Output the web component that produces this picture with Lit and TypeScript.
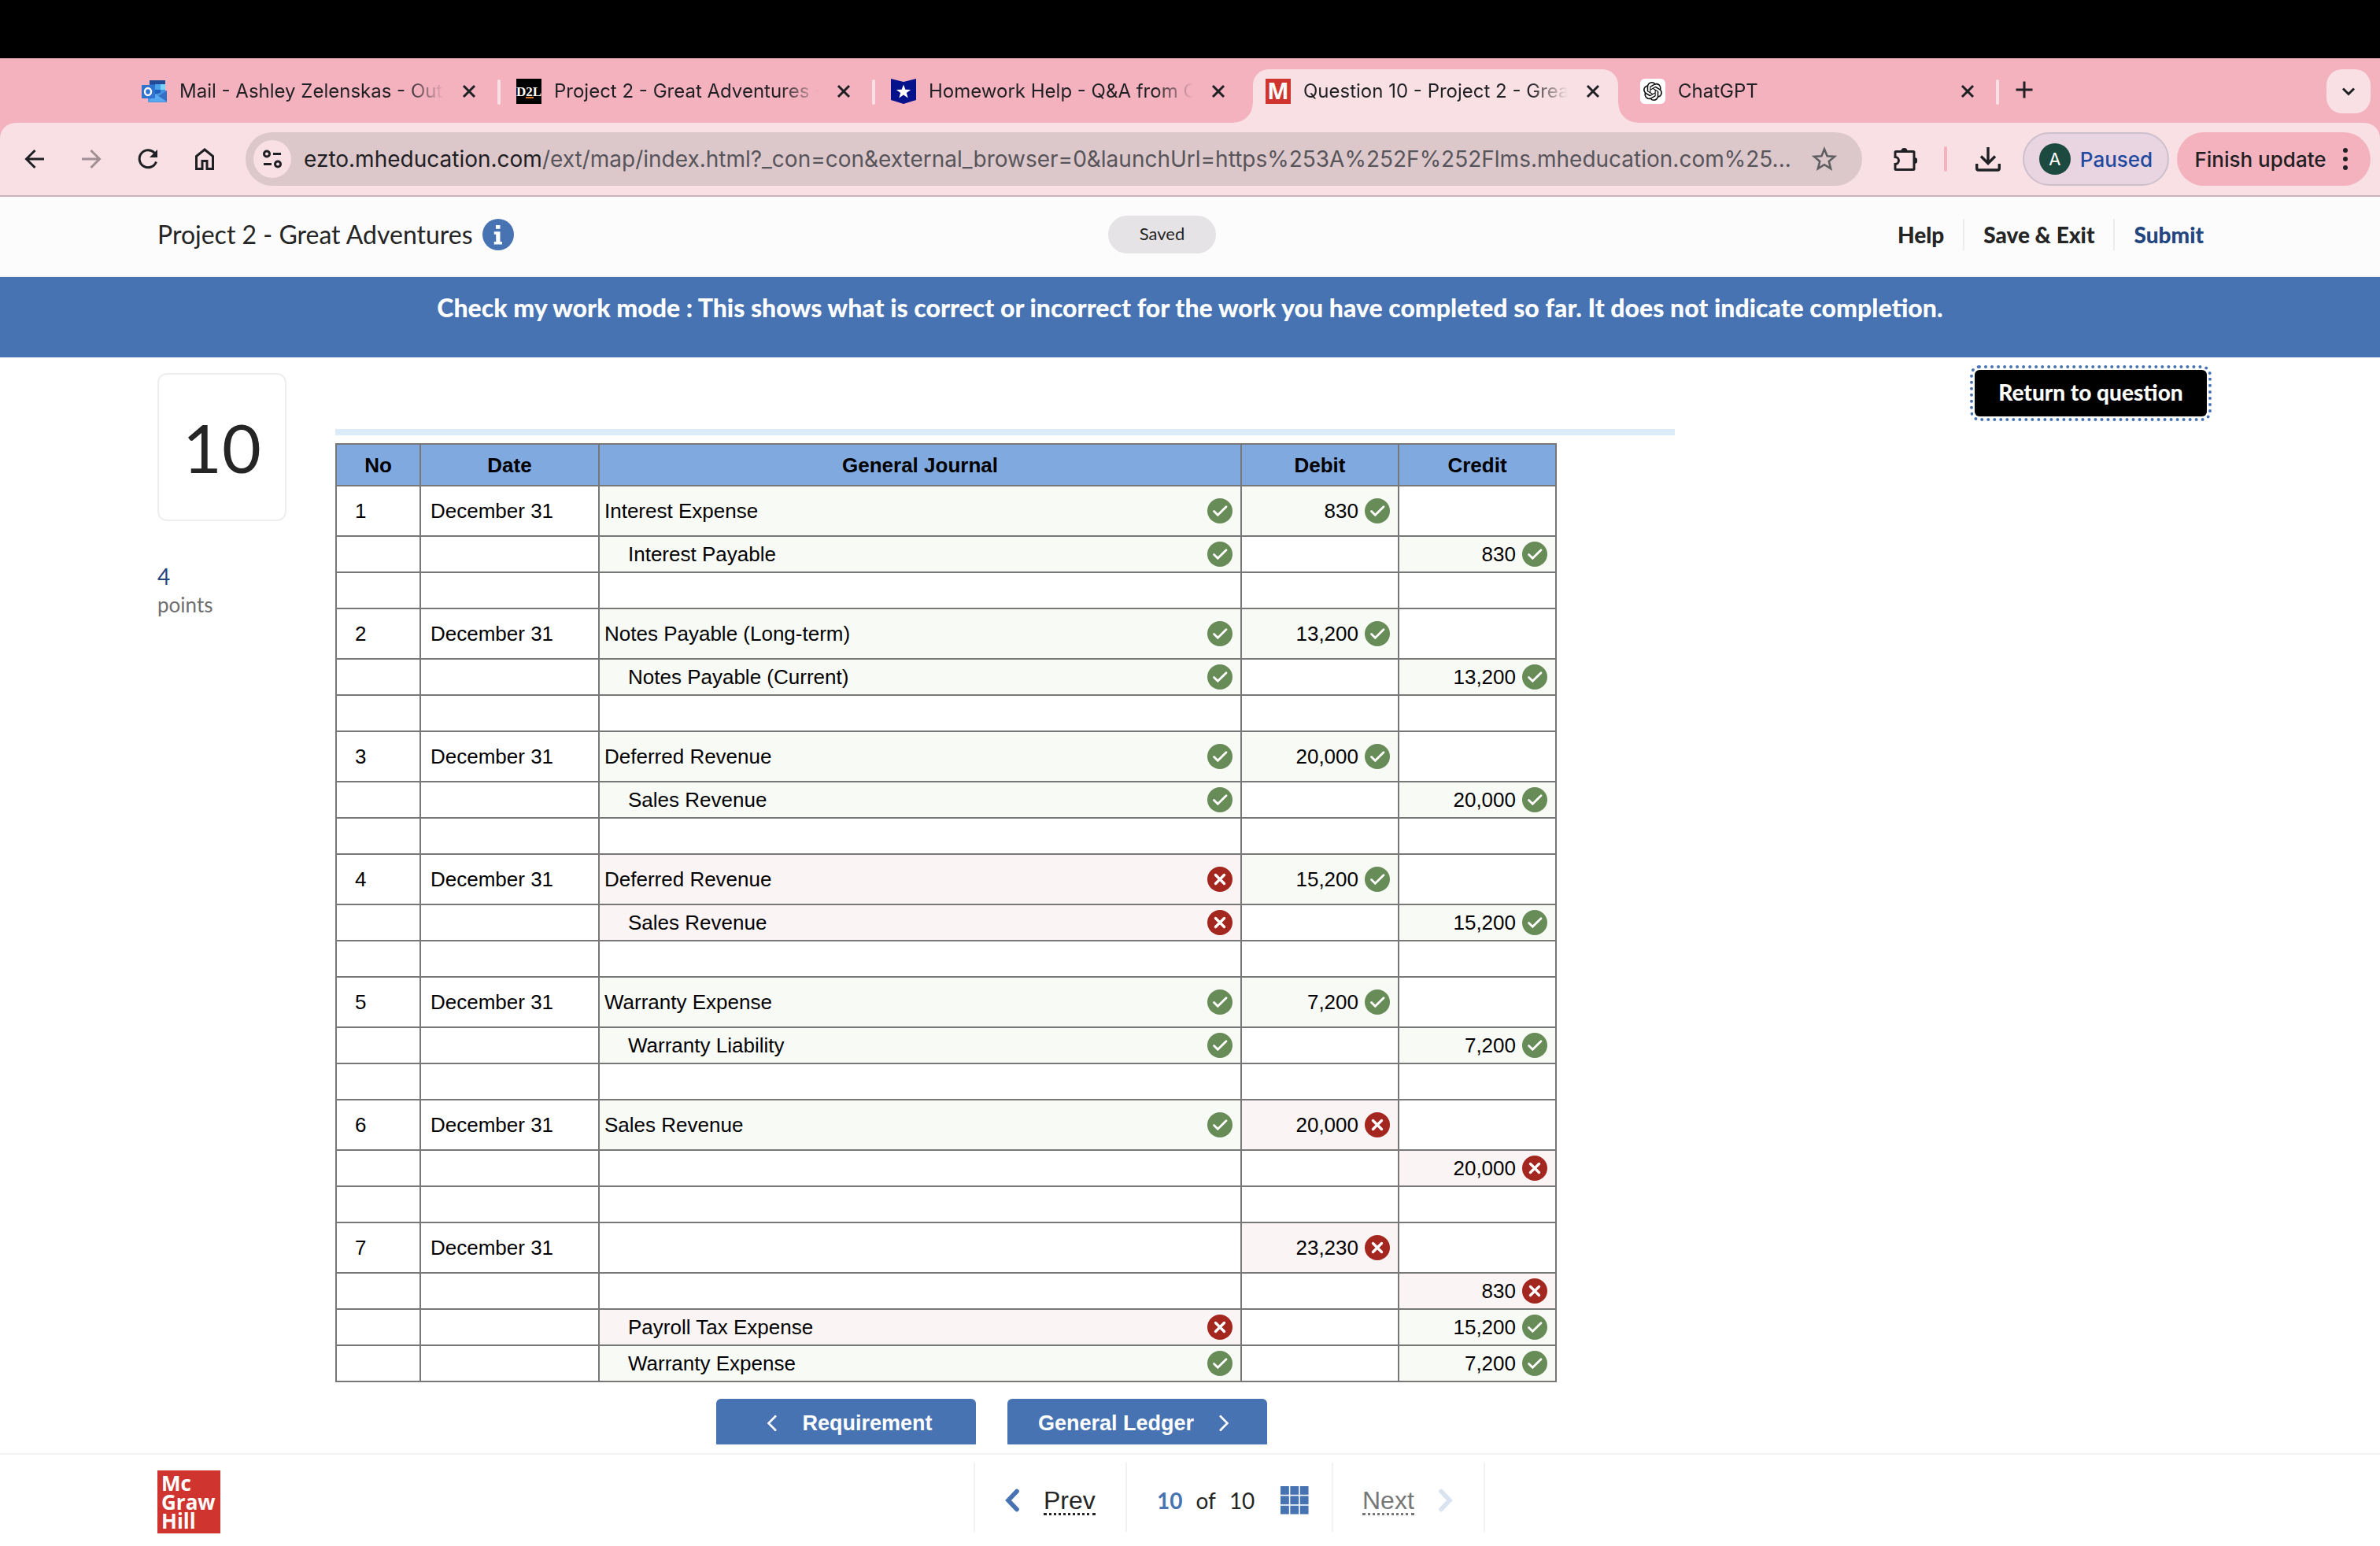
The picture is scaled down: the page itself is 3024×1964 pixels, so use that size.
import { LitElement, html, svg, css, nothing } from "lit";
import { customElement, property } from "lit/decorators.js";
import { classMap } from "lit/directives/class-map.js";

type Mark = "ok" | "bad";
interface Row {
  no?: string;
  date?: string;
  account?: string;
  accountMark?: Mark;
  indent?: boolean;
  debit?: string;
  debitMark?: Mark;
  credit?: string;
  creditMark?: Mark;
}

const entry = (
  no: string,
  account: string,
  accountMark: Mark | undefined,
  debit: string,
  debitMark: Mark
): Row => ({ no, date: "December 31", account, accountMark, debit, debitMark });

const contra = (
  account: string,
  accountMark: Mark | undefined,
  credit: string,
  creditMark: Mark
): Row => ({ account, accountMark, indent: true, credit, creditMark });

const ROWS: Row[] = [
  entry("1", "Interest Expense", "ok", "830", "ok"),
  contra("Interest Payable", "ok", "830", "ok"),
  {},
  entry("2", "Notes Payable (Long-term)", "ok", "13,200", "ok"),
  contra("Notes Payable (Current)", "ok", "13,200", "ok"),
  {},
  entry("3", "Deferred Revenue", "ok", "20,000", "ok"),
  contra("Sales Revenue", "ok", "20,000", "ok"),
  {},
  entry("4", "Deferred Revenue", "bad", "15,200", "ok"),
  contra("Sales Revenue", "bad", "15,200", "ok"),
  {},
  entry("5", "Warranty Expense", "ok", "7,200", "ok"),
  contra("Warranty Liability", "ok", "7,200", "ok"),
  {},
  entry("6", "Sales Revenue", "ok", "20,000", "bad"),
  contra("", undefined, "20,000", "bad"),
  {},
  entry("7", "", undefined, "23,230", "bad"),
  contra("", undefined, "830", "bad"),
  contra("Payroll Tax Expense", "bad", "15,200", "ok"),
  contra("Warranty Expense", "ok", "7,200", "ok"),
];

const OPENAI =
  "M22.2819 9.8211a5.9847 5.9847 0 0 0-.5157-4.9108 6.0462 6.0462 0 0 0-6.5098-2.9A6.0651 6.0651 0 0 0 4.9807 4.1818a5.9847 5.9847 0 0 0-3.9977 2.9 6.0462 6.0462 0 0 0 .7427 7.0966 5.98 5.98 0 0 0 .511 4.9107 6.051 6.051 0 0 0 6.5146 2.9001A5.9847 5.9847 0 0 0 13.2599 24a6.0557 6.0557 0 0 0 5.7718-4.2058 5.9894 5.9894 0 0 0 3.9977-2.9001 6.0557 6.0557 0 0 0-.7475-7.0729zm-9.022 12.6081a4.4755 4.4755 0 0 1-2.8764-1.0408l.1419-.0804 4.7783-2.7582a.7948.7948 0 0 0 .3927-.6813v-6.7369l2.02 1.1686a.071.071 0 0 1 .038.052v5.5826a4.504 4.504 0 0 1-4.4945 4.4944zm-9.6607-4.1254a4.4708 4.4708 0 0 1-.5346-3.0137l.142.0852 4.783 2.7582a.7712.7712 0 0 0 .7806 0l5.8428-3.3685v2.3324a.0804.0804 0 0 1-.0332.0615L9.74 19.9502a4.4992 4.4992 0 0 1-6.1408-1.6464zM2.3408 7.8956a4.485 4.485 0 0 1 2.3655-1.9728V11.6a.7664.7664 0 0 0 .3879.6765l5.8144 3.3543-2.0201 1.1685a.0757.0757 0 0 1-.071 0l-4.8303-2.7865A4.504 4.504 0 0 1 2.3408 7.872zm16.5963 3.8558L13.1038 8.364 15.1192 7.2a.0757.0757 0 0 1 .071 0l4.8303 2.7913a4.4944 4.4944 0 0 1-.6765 8.1042v-5.6772a.79.79 0 0 0-.407-.667zm2.0107-3.0231l-.142-.0852-4.7735-2.7818a.7759.7759 0 0 0-.7854 0L9.409 9.2297V6.8974a.0662.0662 0 0 1 .0284-.0615l4.8303-2.7866a4.4992 4.4992 0 0 1 6.6802 4.66zM8.3065 12.863l-2.02-1.1638a.0804.0804 0 0 1-.038-.0567V6.0742a4.4992 4.4992 0 0 1 7.3757-3.4537l-.142.0805L8.704 5.459a.7948.7948 0 0 0-.3927.6813zm1.0976-2.3654l2.602-1.4998 2.6069 1.4998v2.9994l-2.5974 1.4997-2.6067-1.4997Z";

const GLYPHS: Record<string, unknown> = {
  outlook: svg`
    <rect x="10" y="2" width="20" height="20" rx="1" fill="#1f5fbf"/>
    <rect x="10" y="2" width="20" height="5" fill="#234a94"/>
    <rect x="17" y="7" width="7" height="7" fill="#4aa3ea"/>
    <rect x="24" y="7" width="6" height="7" fill="#7cd3f9"/>
    <rect x="24" y="14" width="6" height="6" fill="#3f8fe0"/>
    <path d="M8 19h12l12-4v14a1 1 0 0 1-1 1H9a1 1 0 0 1-1-1z" fill="#4893df"/>
    <path d="M32 15 20 23l12 7z" fill="#356fc4"/>
    <path d="M32 29 18 20l-10 9z" fill="#57aaf0"/>
    <rect x="0" y="8" width="17" height="17" rx="1" fill="#2f73cf"/>
    <ellipse cx="8" cy="16.500" rx="4" ry="4.500" fill="none" stroke="#fff" stroke-width="2.400"/>`,
  d2l: svg`<rect width="32" height="32"/>
    <text x="16" y="22" text-anchor="middle" font-family="Liberation Serif, serif" font-weight="700" font-size="17" fill="#fff">D2L</text>
    <rect x="12" y="23" width="10" height="2" fill="#e87722"/>`,
  badge: svg`<path d="M0 0l16 4 16-4v27l-16 5-16-5z" fill="#06128c"/>
    <path d="M16 7.500l2.400 6.200 6.800.200-5.400 4 1.900 6.600-5.700-3.900-5.700 3.900 1.900-6.600-5.400-4 6.800-.200z" fill="#fff"/>`,
  mgh: svg`<rect width="32" height="32" fill="#d0342f"/>
    <text x="16" y="26" text-anchor="middle" font-family="Open Sans, Noto Sans, sans-serif" font-weight="700" font-size="29" fill="#fff">M</text>`,
  gpt: svg`<rect width="32" height="32" rx="6" fill="#fff"/>
    <path d="${OPENAI}" transform="translate(4 4)" fill="#111"/>`,
  close: svg`<path d="M9 9l14 14M23 9L9 23" stroke="#1f2023" stroke-width="3" fill="none"/>`,
  plus: svg`<path d="M16 5.500v21M5.500 16h21" stroke="#1f2023" stroke-width="3" fill="none"/>`,
  down: svg`<path d="M9 12.500l7 7 7-7" stroke="#1f2023" stroke-width="3" fill="none"/>`,
  back: svg`<path d="M28 16H6M16.500 5L5.500 16l11 11" stroke="#1f2023" stroke-width="3" fill="none"/>`,
  forward: svg`<path d="M4 16h22M15.500 5l11 11-11 11" stroke="#a08f94" stroke-width="3" fill="none"/>`,
  reload: svg`<path d="M26.500 19.500A11 11 0 1 1 24 8l2 2.500" stroke="#1f2023" stroke-width="3" fill="none"/>
    <path d="M28 4v10H18z" fill="#1f2023"/>`,
  home: svg`<path d="M5.500 28.500V12.500L16 4l10.500 8.500v16h-7.500v-10h-6v10z" stroke="#1f2023" stroke-width="3" fill="none"/>`,
  tune: svg`<g stroke="#1f2023" stroke-width="3" fill="none"><circle cx="9" cy="9.500" r="3.500"/><path d="M17 9.500h10M5 22.500h10"/><circle cx="23" cy="22.500" r="3.500"/></g>`,
  star: svg`<path d="M16 3.500l3.600 8.700 9.400.700-7.200 6.100 2.300 9.200-8.100-5-8.100 5 2.300-9.200L3 12.900l9.400-.700z" stroke="#5f5f62" stroke-width="2.600" fill="none"/>`,
  puzzle: svg`<path d="M5 6.500h22a1 1 0 0 1 1 1v21a1 1 0 0 1-1 1H5a1 1 0 0 1-1-1v-6a4.500 4.500 0 0 0 0-9v-6a1 1 0 0 1 1-1z" stroke="#1f2023" stroke-width="3" fill="none"/>
    <path d="M11.500 6a4 4 0 0 1 8 0zM28.500 14a4 4 0 0 1 0 8z" fill="#1f2023"/>`,
  download: svg`<path d="M16 1v20M7 12.500l9 9 9-9" stroke="#1f2023" stroke-width="3.400" fill="none"/>
    <path d="M1.700 22v6a2 2 0 0 0 2 2h24.600a2 2 0 0 0 2-2v-6" stroke="#1f2023" stroke-width="3.400" fill="none"/>`,
  dots: svg`<g fill="#1f2023"><circle cx="16" cy="5" r="3"/><circle cx="16" cy="16" r="3"/><circle cx="16" cy="27" r="3"/></g>`,
  ok: svg`<circle cx="16" cy="16" r="16" fill="#688c58"/><path d="M8.500 16.500l4.800 4.800L24 10.800" stroke="#fff" stroke-width="2.800" fill="none" stroke-linecap="round"/>`,
  bad: svg`<circle cx="16" cy="16" r="16" fill="#a3261f"/><path d="M10.500 10.500l11 11M21.500 10.500l-11 11" stroke="#fff" stroke-width="3.400" fill="none" stroke-linecap="round"/>`,
  thinLeft: svg`<path d="M21 6.500L11.500 16l9.500 9.500" stroke="#fff" stroke-width="2.600" fill="none"/>`,
  thinRight: svg`<path d="M11 6.500l9.500 9.500-9.500 9.500" stroke="#fff" stroke-width="2.600" fill="none"/>`,
  prev: svg`<path d="M22 4.500L11 16l11 11.500" stroke="#4773b3" stroke-width="5.600" fill="none" stroke-linecap="round"/>`,
  next: svg`<path d="M10 4.500L21 16 10 27.500" stroke="#dae4f1" stroke-width="5.600" fill="none" stroke-linecap="round"/>`,
  info: svg`<circle cx="16" cy="16" r="16" fill="#4773b3"/><path d="M13.600 6.400h4.400v3.800h-4.400zM11.800 13h6.200v10.200h2v2.800h-8.200v-2.800h2v-7.400h-2z" fill="#fff"/>`,
  grid: svg`<g fill="#4773b3">${[0, 11, 22].map((y) =>
    [0, 11, 22].map((x) => svg`<rect x="${x}" y="${y}" width="9.600" height="9.600"/>`)
  )}</g>`,
};

@customElement("ui-icon")
export class UiIcon extends LitElement {
  static styles = css`
    :host { display: block; width: 32px; height: 32px; flex: none; }
    .glyph { display: block; width: 100%; height: 100%; }
  `;
  @property() name = "";
  render() {
    return html`<svg class="glyph" viewBox="0 0 32 32" aria-hidden="true">${GLYPHS[this.name]}</svg>`;
  }
}

@customElement("browser-chrome")
export class BrowserChrome extends LitElement {
  static styles = css`
    * { box-sizing: border-box; }
    :host { display: block; flex: none; font-family: Inter, "Liberation Sans", sans-serif; color: #1f2023; }
    button { border: 0; padding: 0; margin: 0; background: none; font: inherit; color: inherit; display: flex; align-items: center; justify-content: center; }
    .notch { height: 74px; background: #000; }
    .strip { display: flex; align-items: flex-start; background: #f4b1be; padding: 14px 12px 0 164px; }
    .tab { position: relative; display: flex; align-items: center; gap: 16px; flex: 0 1 464px; min-width: 0; height: 68px; padding: 0 16px 12px; }
    .tab.active { background: #f9e0e4; border-radius: 20px 20px 0 0; }
    .tab.active::before, .tab.active::after { content: ""; position: absolute; bottom: 0; width: 24px; height: 24px; }
    .tab.active::before { right: 100%; background: radial-gradient(circle at 0 0, transparent 23px, #f9e0e4 24px); }
    .tab.active::after { left: 100%; background: radial-gradient(circle at 100% 0, transparent 23px, #f9e0e4 24px); }
    .title { flex: 1; min-width: 0; font-size: 24px; line-height: 32px; white-space: nowrap; overflow: hidden; mask-image: linear-gradient(to right, #000 calc(100% - 48px), transparent); }
    .split { flex: none; width: 4px; height: 32px; margin: 13px 4px 0; border-radius: 2px; background: #f9e0e4; }
    .split.hidden { visibility: hidden; }
    .plus { width: 32px; height: 52px; margin-left: 12px; }
    .list { width: 56px; height: 56px; margin-left: auto; border-radius: 20px; background: #f9e0e4; }
    .under { background: #f4b1be; }
    .bar { display: flex; align-items: center; height: 94px; padding: 0 12px 0 28px; background: #f9e0e4; border-radius: 20px 20px 0 0; border-bottom: 2px solid #c8b6bc; }
    .nav { display: flex; gap: 40px; }
    .omnibox { display: flex; align-items: center; flex: 1; min-width: 0; height: 68px; margin-left: 36px; padding: 0 32px 0 10px; border-radius: 34px; background: #dcc8cb; font-size: 28px; line-height: 36px; }
    .site { width: 48px; height: 48px; border-radius: 24px; background: #f9e0e4; margin-right: 16px; flex: none; }
    .path { flex: 1; min-width: 0; border: 0; padding: 0; margin: 0 16px 0 0; background: none; font: inherit; color: #57545a; outline: 0; }
    .tools { display: flex; align-items: center; margin-left: 38px; }
    .rule { width: 4px; height: 32px; margin: 0 36px 0 34px; border-radius: 2px; background: #f4b1be; }
    .profile { gap: 12px; width: 186px; height: 68px; margin-left: 28px; border: 2px solid #cdbfcb; border-radius: 34px; background: #e9d5e1; color: #2149a0; font-size: 26px; font-weight: 500; white-space: nowrap; }
    .avatar { width: 40px; height: 40px; border-radius: 20px; background: #1d4a40; color: #fff; font-size: 22px; font-weight: 400; line-height: 40px; text-align: center; }
    .update { gap: 8px; width: 246px; height: 68px; margin-left: 10px; padding-left: 6px; border-radius: 34px; background: #f4b1be; font-size: 26px; font-weight: 500; white-space: nowrap; }
  `;
  private tabs = [
    { icon: "outlook", title: "Mail - Ashley Zelenskas - Outlook" },
    { icon: "d2l", title: "Project 2 - Great Adventures - ACC" },
    { icon: "badge", title: "Homework Help - Q&A from Online" },
    { icon: "mgh", title: "Question 10 - Project 2 - Great Adv", active: true },
    { icon: "gpt", title: "ChatGPT" },
  ];
  render() {
    return html`
      <div class="notch"></div>
      <div class="strip">
        ${this.tabs.map(
          (t, i) => html`
            <div class=${classMap({ tab: true, active: !!t.active })}>
              <ui-icon name=${t.icon}></ui-icon>
              <span class="title">${t.title}</span>
              <button aria-label="Close tab"><ui-icon name="close"></ui-icon></button>
            </div>
            <span class=${classMap({ split: true, hidden: i === 2 || i === 3 })}></span>
          `
        )}
        <button class="plus" aria-label="New tab"><ui-icon name="plus"></ui-icon></button>
        <button class="list" aria-label="Search tabs"><ui-icon name="down"></ui-icon></button>
      </div>
      <div class="under">
        <div class="bar">
          <div class="nav">
            <button aria-label="Back"><ui-icon name="back"></ui-icon></button>
            <button aria-label="Forward"><ui-icon name="forward"></ui-icon></button>
            <button aria-label="Reload"><ui-icon name="reload"></ui-icon></button>
            <button aria-label="Home"><ui-icon name="home"></ui-icon></button>
          </div>
          <div class="omnibox">
            <button class="site" aria-label="Site information"><ui-icon name="tune"></ui-icon></button>
            <label for="url">ezto.mheducation.com</label>
            <input id="url" class="path" type="text"
              .value=${"/ext/map/index.html?_con=con&external_browser=0&launchUrl=https%253A%252F%252Flms.mheducation.com%25..."} />
            <button aria-label="Bookmark"><ui-icon name="star"></ui-icon></button>
          </div>
          <div class="tools">
            <button aria-label="Extensions"><ui-icon name="puzzle"></ui-icon></button>
            <span class="rule"></span>
            <button aria-label="Downloads"><ui-icon name="download"></ui-icon></button>
            <button class="profile"><span class="avatar">A</span>Paused</button>
            <button class="update">Finish update<ui-icon name="dots"></ui-icon></button>
          </div>
        </div>
      </div>
    `;
  }
}

@customElement("journal-table")
export class JournalTable extends LitElement {
  static styles = css`
    * { box-sizing: border-box; }
    :host { display: block; font-family: "Liberation Sans", Arial, sans-serif; font-size: 26px; line-height: 32px; color: #000; }
    .journal { width: 100%; border-collapse: collapse; table-layout: fixed; }
    .journal th, .journal td { border: 2px solid #777; padding: 0; }
    .journal th { height: 53px; background: #80a9df; font-weight: 700; text-align: center; }
    .journal td { height: 46px; text-align: left; }
    .journal .lead td { height: 64px; }
    .no { width: 107px; }
    .date { width: 227px; }
    .money { width: 200px; }
    .journal .num { padding-left: 23px; }
    .journal .day { padding-left: 12px; }
    .cell { display: flex; align-items: center; justify-content: space-between; gap: 8px; padding: 0 10px 0 6px; }
    .cell.indent { padding-left: 36px; }
    .cell.amount { justify-content: flex-end; }
    .ok { background: #f8faf6; }
    .bad { background: #fbf4f5; }
  `;
  private mark(m?: Mark) {
    return m ? html`<ui-icon name=${m} role="img" aria-label=${m === "ok" ? "correct" : "incorrect"}></ui-icon>` : nothing;
  }
  private amount(value?: string, m?: Mark) {
    return html`<td class=${m ?? ""}>
      ${value ? html`<div class="cell amount"><span>${value}</span>${this.mark(m)}</div>` : nothing}
    </td>`;
  }
  render() {
    return html`
      <table class="journal">
        <thead>
          <tr>
            <th class="no" scope="col">No</th>
            <th class="date" scope="col">Date</th>
            <th scope="col">General Journal</th>
            <th class="money" scope="col">Debit</th>
            <th class="money" scope="col">Credit</th>
          </tr>
        </thead>
        <tbody>
          ${ROWS.map(
            (r) => html`
              <tr class=${r.no ? "lead" : ""}>
                <td class="num">${r.no ?? nothing}</td>
                <td class="day">${r.date ?? nothing}</td>
                <td class=${r.accountMark ?? ""}>
                  ${r.account
                    ? html`<div class=${classMap({ cell: true, indent: !!r.indent })}>
                        <span>${r.account}</span>${this.mark(r.accountMark)}
                      </div>`
                    : nothing}
                </td>
                ${this.amount(r.debit, r.debitMark)} ${this.amount(r.credit, r.creditMark)}
              </tr>
            `
          )}
        </tbody>
      </table>
    `;
  }
}

@customElement("app-root")
export class AppRoot extends LitElement {
  static styles = css`
    * { box-sizing: border-box; }
    :host { display: flex; flex-direction: column; height: 100vh; overflow: hidden; background: #fff; font-family: Lato, "Open Sans", sans-serif; color: #252525; }
    button { border: 0; padding: 0; margin: 0; background: none; font: inherit; color: inherit; }
    .head { flex: none; display: grid; grid-template-columns: 17fr auto 18fr; align-items: center; height: 102px; padding: 0 200px 4px; background: #fcfcfc; border-bottom: 2px solid #f2f2f2; }
    .name { display: flex; align-items: center; gap: 12px; font-size: 32px; line-height: 40px; font-weight: 400; margin: 0; }
    .info { width: 40px; height: 40px; }
    .saved { height: 48px; padding: 0 40px; border-radius: 24px; background: #e5e3e5; font-size: 22px; line-height: 46px; }
    .menu { display: flex; justify-content: flex-end; }
    .menu a { padding: 0 24px; line-height: 40px; font-size: 28px; font-weight: 900; color: #252525; text-decoration: none; }
    .menu a + a { border-left: 2px solid #ededed; }
    .menu .submit { color: #24467e; }
    .banner { flex: none; height: 102px; padding-top: 19px; background: #4773b3; color: #fff; font-size: 32px; line-height: 40px; font-weight: 900; text-align: center; }
    .main { flex: 1; min-height: 0; overflow: hidden; display: flex; align-items: flex-start; margin-bottom: 11px; padding: 16px 220px 0 200px; }
    .side { flex: none; width: 164px; padding-top: 4px; }
    .number { display: flex; align-items: center; justify-content: center; height: 188px; border: 2px solid #eee; border-radius: 12px; font-size: 86px; line-height: 100px; }
    .points { margin: 52px 0 0; font-size: 26px; line-height: 36px; color: #6f6f6f; }
    .points b { display: block; font-size: 28px; font-weight: 400; color: #24467e; }
    .work { flex: 1; min-width: 0; margin: 75px 381px 0 62px; }
    .stripe { height: 8px; margin-bottom: 10px; background: #dcebf8; }
    .sheet { margin-right: 150px; }
    .steps { display: flex; justify-content: center; gap: 40px; padding: 21px 34px 0 0; font-family: "Liberation Sans", Arial, sans-serif; font-weight: 700; font-size: 27px; line-height: 32px; color: #fff; }
    .step { display: flex; align-items: center; justify-content: center; gap: 22px; width: 330px; height: 62px; border-radius: 6px; background: #4773b3; }
    .return { flex: none; width: 295px; height: 59px; padding-bottom: 4px; border-radius: 6px; background: #000; color: #fff; font-size: 28px; font-weight: 900; line-height: 40px; outline: 4px dotted #4773b3; outline-offset: 2px; }
    .foot { flex: none; display: flex; align-items: flex-start; height: 118px; padding: 10px 180px 0 200px; border-top: 2px solid #f2f2f2; background: #fff; }
    .logo { width: 80px; height: 80px; margin-top: 10px; padding: 4px 5px 0; background: #d0342f; color: #fff; font-family: "Open Sans", "Noto Sans", sans-serif; font-size: 26px; line-height: 24px; font-weight: 700; }
    .logo span { display: block; }
    .pager { display: flex; margin: 0 auto; height: 88px; font-family: "Liberation Sans", Arial, sans-serif; font-size: 32px; line-height: 40px; }
    .pager > * { display: flex; align-items: center; border-left: 2px solid #f2f2f2; padding-top: 7px; }
    .pager > :last-child { border-right: 2px solid #f2f2f2; }
    .pager .go { gap: 24px; width: 193px; padding-left: 31px; }
    .pager .fwd { width: 195px; padding-left: 37px; color: #777; }
    .word { border-bottom: 3px dotted currentColor; line-height: 32px; padding-top: 3px; }
    .count { gap: 17px; width: 262px; padding-left: 38px; font-family: Lato, "Open Sans", sans-serif; font-size: 28px; }
    .count b { color: #4773b3; }
    .count .grid { width: 36px; height: 36px; margin-left: 16px; }
  `;
  render() {
    return html`
      <browser-chrome></browser-chrome>
      <header class="head">
        <h1 class="name">Project 2 - Great Adventures <ui-icon class="info" name="info"></ui-icon></h1>
        <span class="saved">Saved</span>
        <nav class="menu">
          <a href="#help">Help</a>
          <a href="#exit">Save &amp; Exit</a>
          <a class="submit" href="#submit">Submit</a>
        </nav>
      </header>
      <div class="banner">
        Check my work mode : This shows what is correct or incorrect for the work you have completed so far. It does not
        indicate completion.
      </div>
      <main class="main">
        <aside class="side">
          <div class="number">10</div>
          <p class="points"><b>4</b>points</p>
        </aside>
        <section class="work">
          <div class="stripe"></div>
          <journal-table class="sheet"></journal-table>
          <div class="steps">
            <button class="step"><ui-icon name="thinLeft"></ui-icon>Requirement</button>
            <button class="step">General Ledger<ui-icon name="thinRight"></ui-icon></button>
          </div>
        </section>
        <button class="return">Return to question</button>
      </main>
      <footer class="foot">
        <div class="logo"><span>Mc</span><span>Graw</span><span>Hill</span></div>
        <nav class="pager">
          <button class="go"><ui-icon name="prev"></ui-icon><span class="word">Prev</span></button>
          <div class="count"><b>10</b><span>of</span><span>10</span>
            <button aria-label="All questions"><ui-icon class="grid" name="grid"></ui-icon></button></div>
          <button class="go fwd"><span class="word">Next</span><ui-icon name="next"></ui-icon></button>
        </nav>
      </footer>
    `;
  }
}
